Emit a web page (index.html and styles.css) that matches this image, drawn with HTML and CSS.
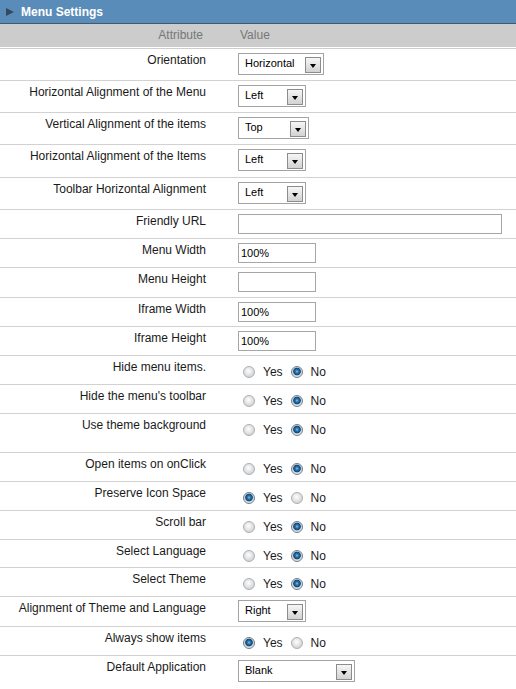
FILE: index.html
```html
<!DOCTYPE html>
<html>
<head>
<meta charset="utf-8">
<title>Menu Settings</title>
<link rel="stylesheet" href="styles.css">
</head>
<body>
<div class="panel">
  <div class="title"><span class="tri"></span><span class="title-text">Menu Settings</span></div>
  <div class="colhead"><div class="c-attr">Attribute</div><div class="c-val">Value</div></div>
  <div class="rows">
    <div class="row r-sel"><div class="lbl">Orientation</div><div class="val"><div class="select w86"><span class="sel-text">Horizontal</span><span class="sel-btn"></span></div></div></div>
    <div class="row r-sel"><div class="lbl">Horizontal Alignment of the Menu</div><div class="val"><div class="select w68"><span class="sel-text">Left</span><span class="sel-btn"></span></div></div></div>
    <div class="row r-sel"><div class="lbl">Vertical Alignment of the items</div><div class="val"><div class="select w71"><span class="sel-text">Top</span><span class="sel-btn"></span></div></div></div>
    <div class="row r-sel r-sel-x"><div class="lbl">Horizontal Alignment of the Items</div><div class="val"><div class="select w68"><span class="sel-text">Left</span><span class="sel-btn"></span></div></div></div>
    <div class="row r-sel"><div class="lbl">Toolbar Horizontal Alignment</div><div class="val"><div class="select w68"><span class="sel-text">Left</span><span class="sel-btn"></span></div></div></div>
    <div class="row r-in"><div class="lbl">Friendly URL</div><div class="val"><input class="txt wide" type="text" value=""></div></div>
    <div class="row r-in"><div class="lbl">Menu Width</div><div class="val"><input class="txt" type="text" value="100%"></div></div>
    <div class="row r-in r-in-x"><div class="lbl">Menu Height</div><div class="val"><input class="txt" type="text" value=""></div></div>
    <div class="row r-in"><div class="lbl">Iframe Width</div><div class="val"><input class="txt" type="text" value="100%"></div></div>
    <div class="row r-in"><div class="lbl">Iframe Height</div><div class="val"><input class="txt" type="text" value="100%"></div></div>
    <div class="row r-rad"><div class="lbl">Hide menu items.</div><div class="val val-rad"><div class="rgroup"><span class="radio"></span><span class="rtext">Yes</span><span class="radio on"></span><span class="rtext">No</span></div></div></div>
    <div class="row r-rad"><div class="lbl">Hide the menu's toolbar</div><div class="val val-rad"><div class="rgroup"><span class="radio"></span><span class="rtext">Yes</span><span class="radio on"></span><span class="rtext">No</span></div></div></div>
    <div class="row r-tall"><div class="lbl">Use theme background</div><div class="val val-rad"><div class="rgroup"><span class="radio"></span><span class="rtext">Yes</span><span class="radio on"></span><span class="rtext">No</span></div></div></div>
    <div class="row r-rad"><div class="lbl">Open items on onClick</div><div class="val val-rad"><div class="rgroup"><span class="radio"></span><span class="rtext">Yes</span><span class="radio on"></span><span class="rtext">No</span></div></div></div>
    <div class="row r-rad"><div class="lbl">Preserve Icon Space</div><div class="val val-rad"><div class="rgroup"><span class="radio on"></span><span class="rtext">Yes</span><span class="radio"></span><span class="rtext">No</span></div></div></div>
    <div class="row r-rad"><div class="lbl">Scroll bar</div><div class="val val-rad"><div class="rgroup"><span class="radio"></span><span class="rtext">Yes</span><span class="radio on"></span><span class="rtext">No</span></div></div></div>
    <div class="row r-rad r-rad-s"><div class="lbl">Select Language</div><div class="val val-rad"><div class="rgroup"><span class="radio"></span><span class="rtext">Yes</span><span class="radio on"></span><span class="rtext">No</span></div></div></div>
    <div class="row r-rad"><div class="lbl">Select Theme</div><div class="val val-rad"><div class="rgroup"><span class="radio"></span><span class="rtext">Yes</span><span class="radio on"></span><span class="rtext">No</span></div></div></div>
    <div class="row r-in2"><div class="lbl">Alignment of Theme and Language</div><div class="val val-sel2"><div class="select w68"><span class="sel-text">Right</span><span class="sel-btn"></span></div></div></div>
    <div class="row r-rad"><div class="lbl">Always show items</div><div class="val val-rad"><div class="rgroup"><span class="radio on"></span><span class="rtext">Yes</span><span class="radio"></span><span class="rtext">No</span></div></div></div>
    <div class="row r-sel r-last"><div class="lbl">Default Application</div><div class="val"><div class="select w117"><span class="sel-text">Blank</span><span class="sel-btn"></span></div></div></div>
  </div>
</div>
</body>
</html>
```
FILE: styles.css
```css
html, body {
  margin: 0;
  padding: 0;
  background: #ffffff;
}
body {
  font-family: "Liberation Sans", Arial, sans-serif;
  font-size: 12px;
  color: #1a1a1a;
}
.panel {
  width: 516px;
}
.title {
  height: 24px;
  box-sizing: border-box;
  background: #5a8cba;
  border-bottom: 1px solid #45596c;
  display: flex;
  align-items: center;
  padding-left: 6px;
}
.tri {
  width: 0;
  height: 0;
  border-left: 8px solid #34495d;
  border-top: 4.5px solid transparent;
  border-bottom: 4.5px solid transparent;
  margin-right: 7px;
}
.title-text {
  color: #ffffff;
  font-weight: bold;
  font-size: 12px;
  line-height: 14px;
}
.colhead {
  height: 24px;
  box-sizing: border-box;
  background: #cccccc;
  border-bottom: 1px solid #ffffff;
  display: grid;
  grid-template-columns: 234px 1fr;
  color: #777777;
  line-height: 23px;
}
.c-attr {
  text-align: right;
  padding-right: 31px;
}
.c-val {
  padding-left: 6px;
}
.rows {
  border-top: 1px solid #cdcdcd;
}
.row {
  display: grid;
  grid-template-columns: 234px 1fr;
  box-sizing: border-box;
  border-bottom: 1px solid #d2d2d2;
  height: 29px;
}
.r-sel { height: 32px; }
.r-sel-x { height: 33px; }
.r-in-x { height: 30px; }
.r-in2 { height: 30px; }
.r-rad-s { height: 28px; }
.r-tall { height: 39px; }
.r-last { border-bottom: none; height: 34px; }
.lbl {
  text-align: right;
  padding: 4px 28px 0 0;
  line-height: 14px;
  white-space: nowrap;
}
.val {
  padding: 4px 0 0 4px;
}
.val-sel2 {
  padding-top: 3px;
}
.select {
  height: 22px;
  box-sizing: border-box;
  border: 1px solid #a3a3a3;
  display: flex;
  align-items: center;
  justify-content: space-between;
  padding: 0 2px 0 6px;
  font-size: 11px;
  color: #000000;
  background: #ffffff;
}
.w86 { width: 86px; }
.w68 { width: 68px; }
.w71 { width: 71px; }
.w117 { width: 117px; }
.sel-text {
  line-height: 13px;
  margin-top: -2px;
}
.sel-btn {
  position: relative;
  width: 16px;
  height: 16px;
  box-sizing: border-box;
  border: 1px solid #8c8c8c;
  background: linear-gradient(#f6f6f6, #d2d2d2);
  margin-top: 1px;
}
.sel-btn::after {
  content: "";
  position: absolute;
  left: 4px;
  top: 6px;
  width: 0;
  height: 0;
  border-left: 3.5px solid transparent;
  border-right: 3.5px solid transparent;
  border-top: 4px solid #000000;
}
.txt {
  display: block;
  width: 78px;
  height: 20px;
  box-sizing: border-box;
  border: 1px solid #a6a6a6;
  padding: 0 2px;
  margin: 0;
  font-family: "Liberation Sans", Arial, sans-serif;
  font-size: 11px;
  color: #000000;
  outline: none;
}
.txt.wide {
  width: 264px;
}
.val-rad {
  padding-top: 9px;
}
.rgroup {
  display: flex;
  align-items: center;
  height: 14px;
  line-height: 14px;
  font-size: 12px;
  color: #1a1a1a;
}
.radio {
  width: 12px;
  height: 12px;
  box-sizing: border-box;
  border-radius: 50%;
  border: 1px solid #a9b0b6;
  background: radial-gradient(circle at 45% 40%, #ffffff 0, #f0f0f0 2px, #d4d4d4 6px);
  margin-left: 8px;
  margin-right: 8px;
}
.rgroup .radio:first-child {
  margin-left: 5px;
}
.radio.on {
  border-color: #6d7f8f;
  background: radial-gradient(circle at 50% 45%, #8cc2ea 0, #2c73aa 1.6px, #114877 3.4px, #c9d2da 4.2px, #f2f2f2 6px);
}
```
